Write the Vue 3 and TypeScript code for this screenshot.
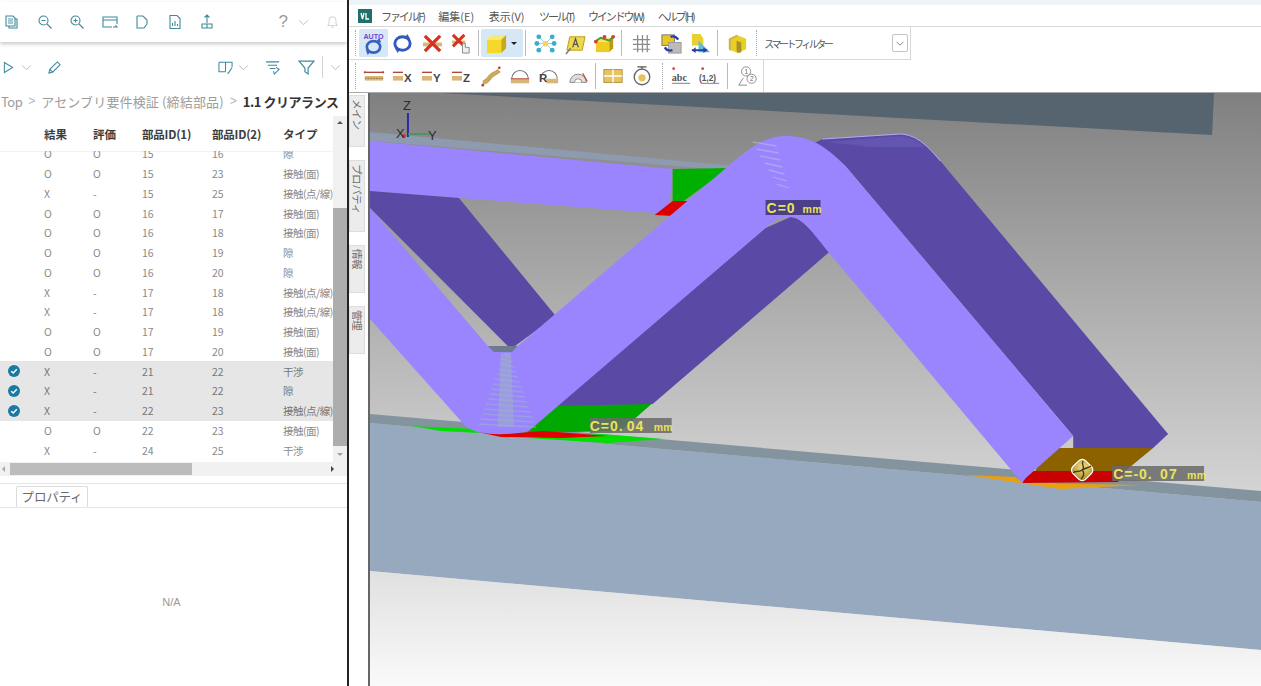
<script setup lang="ts">
interface Row { mark?: boolean; res: string; ev: string; a: number; b: number; type: string }
const t = { face: '接触(面)', line: '接触(点/線)', gap: '隙', hit: '干渉' }
const rows: Row[] = [
  { res: 'O', ev: 'O', a: 15, b: 16, type: t.gap },
  { res: 'O', ev: 'O', a: 15, b: 23, type: t.face },
  { res: 'X', ev: '-', a: 15, b: 25, type: t.line },
  { res: 'O', ev: 'O', a: 16, b: 17, type: t.face },
  { res: 'O', ev: 'O', a: 16, b: 18, type: t.face },
  { res: 'O', ev: 'O', a: 16, b: 19, type: t.gap },
  { res: 'O', ev: 'O', a: 16, b: 20, type: t.gap },
  { res: 'X', ev: '-', a: 17, b: 18, type: t.line },
  { res: 'X', ev: '-', a: 17, b: 18, type: t.line },
  { res: 'O', ev: 'O', a: 17, b: 19, type: t.face },
  { res: 'O', ev: 'O', a: 17, b: 20, type: t.face },
  { mark: true, res: 'X', ev: '-', a: 21, b: 22, type: t.hit },
  { mark: true, res: 'X', ev: '-', a: 21, b: 22, type: t.gap },
  { mark: true, res: 'X', ev: '-', a: 22, b: 23, type: t.line },
  { res: 'O', ev: 'O', a: 22, b: 23, type: t.face },
  { res: 'X', ev: '-', a: 24, b: 25, type: t.hit },
]
const menus = [
  { label: 'ファイル(F)', kana: true },
  { label: '編集(E)', kana: false },
  { label: '表示(V)', kana: false },
  { label: 'ツール(T)', kana: true },
  { label: 'ウインドウ(W)', kana: true },
  { label: 'ヘルプ(H)', kana: true },
]
const sideTabs = ['メイン', 'プロパティ', '情報', '管理']
const hatchA = Array.from({ length: 15 }, (_, i) => i)
const hatchB = Array.from({ length: 7 }, (_, i) => i)
</script>

<template>
  <div class="app">
    <aside class="left">
      <div class="bar1">
        <svg class="ic" viewBox="0 0 16 16"><path d="M2 2h7l2 2v8H2zM11 5h2v9H5v-2" /><path d="M4 4h5v6H4z" class="fillt" /></svg>
        <svg class="ic" viewBox="0 0 16 16"><circle cx="6.5" cy="6.5" r="4.5" /><path d="M4.5 6.500h4M10 10l4.500 4.500" /></svg>
        <svg class="ic" viewBox="0 0 16 16"><circle cx="6.500" cy="6.500" r="4.500" /><path d="M4.500 6.500h4M6.500 4.500v4M10 10l4.500 4.500" /></svg>
        <svg class="ic" viewBox="0 0 16 16"><path d="M1 3h14v3H1zM1 6v7h9M15 6v4M11 13h4l-1.500-1.500" /></svg>
        <svg class="ic" viewBox="0 0 16 16"><path d="M3 2h6l4 4v4M3 2v12h7l3-4" /></svg>
        <svg class="ic" viewBox="0 0 16 16"><path d="M3 1.500h7l3 3v10H3z" /><path d="M5.500 12V9M8 12V7M10.500 12V10" /></svg>
        <svg class="ic" viewBox="0 0 16 16"><path d="M8 1v8M5.500 3.500 8 1l2.500 2.500M3 10h10v4H3zM8 10v4" /></svg>
        <span class="help">?</span>
        <svg class="chev ch1" viewBox="0 0 12 8"><path d="M1 1.500 6 6.500l5-5" /></svg>
        <svg class="bell" viewBox="0 0 14 16"><path d="M7 2a4 4 0 0 0-4 4v4l-1.500 2h11L11 10V6a4 4 0 0 0-4-4zM5.500 14h3" /></svg>
      </div>
      <div class="bar2">
        <svg class="ic2" viewBox="0 0 12 14"><path d="M1.500 1.500v11l9-5.500z" /></svg>
        <svg class="chev ch2" viewBox="0 0 12 8"><path d="M1 1.500 6 6.500l5-5" /></svg>
        <svg class="ic pen" viewBox="0 0 16 16"><path d="M2 14l1-4 8-8 3 3-8 8zM3 10l3 3" /></svg>
        <span class="spacer"></span>
        <svg class="ic" viewBox="0 0 16 16"><path d="M1 2.500h14v5M1 2.500v10h7M8 2.500v10M15 8l-4 6-1 0" /></svg>
        <svg class="chev ch3" viewBox="0 0 12 8"><path d="M1 1.500 6 6.500l5-5" /></svg>
        <svg class="ic list" viewBox="0 0 16 16"><path d="M1 2h14M3 5.500h10M5 9h6M12 8l3 2-5 5-1-3" /></svg>
        <svg class="ic filter" viewBox="0 0 16 16"><path d="M1 2h14L9.500 8.500V14l-3-2V8.500z" /></svg>
        <i class="vsep"></i>
        <svg class="chev ch4" viewBox="0 0 12 8"><path d="M1 1.500 6 6.500l5-5" /></svg>
      </div>
      <nav class="crumb">
        <span class="top">Top</span><b class="gt">&gt;</b><span class="mid">アセンブリ要件検証 (締結部品)</span><b class="gt">&gt;</b><strong>1.1 クリアランス</strong>
      </nav>
      <div class="tablewrap">
        <div class="tablemain">
          <div class="thead">
            <span class="c0"></span><span class="c1">結果</span><span class="c2">評価</span><span class="c3">部品ID(1)</span><span class="c4">部品ID(2)</span><span class="c5">タイプ</span>
          </div>
          <div class="tbody">
            <div v-for="(r, i) in rows" :key="i" class="row" :class="{ sel: r.mark }">
              <span class="c0">
                <svg v-if="r.mark" class="check" viewBox="0 0 12 12"><circle cx="6" cy="6" r="6" /><path d="M3.200 6.200 5.200 8l3.600-3.800" /></svg>
              </span>
              <span class="c1">{{ r.res }}</span><span class="c2">{{ r.ev }}</span><span class="c3">{{ r.a }}</span><span class="c4">{{ r.b }}</span><span class="c5">{{ r.type }}</span>
            </div>
          </div>
        </div>
        <div class="vscroll">
          <span class="arr up"></span>
          <span class="vtrack"><i class="vthumb"></i></span>
          <span class="arr down"></span>
        </div>
      </div>
      <div class="hscroll">
        <span class="harr l"></span>
        <span class="htrack"><i class="hthumb"></i></span>
        <span class="harr r"></span>
      </div>
      <div class="tabs"><span class="tab">プロパティ</span></div>
      <div class="na">N/A</div>
    </aside>

    <main class="right">
      <div class="topstrip"></div>
      <div class="menubar">
        <svg class="logo" viewBox="0 0 14 14"><rect width="14" height="14" fill="#1f6f6a" /><path d="M3 4l1.500 6L6 4M8 4v6h3" stroke="#fff" fill="none" stroke-width="1.300" /></svg>
        <span v-for="m in menus" :key="m.label" class="menu" :class="{ kana: m.kana }">{{ m.label }}</span>
      </div>
      <div class="tbrow r1">
        <i class="grip"></i>
        <span class="tb active">
          <svg viewBox="0 0 24 24"><text x="12" y="7" class="auto">AUTO</text><ellipse cx="12" cy="15.500" rx="7" ry="6" fill="none" stroke="#3a5fc0" stroke-width="2.800" /><path d="M18 6l2 5-5-1zM6 24l-2-5 5 1z" fill="#3a5fc0" /></svg>
        </span>
        <span class="tb"><svg viewBox="0 0 24 24"><ellipse cx="12" cy="12" rx="8" ry="7" fill="none" stroke="#3458c0" stroke-width="3" /><path d="M17 2l3 5-6 0zM7 22l-3-5 6 0z" fill="#3458c0" /></svg></span>
        <span class="tb"><svg viewBox="0 0 24 24"><path d="M2 11h20v4H2z" fill="#d9b778" /><path d="M4 4l16 16M20 4 4 20" stroke="#d8321e" stroke-width="3.500" /></svg></span>
        <span class="tb"><svg viewBox="0 0 24 24"><path d="M2 9h14v3H2z" fill="#d9b778" /><path d="M3 3l12 12M15 3 3 15" stroke="#d8321e" stroke-width="3" /><path d="M13 15v-3h3v4h4v6h-7z" fill="#eee" stroke="#888" /></svg></span>
        <i class="sep"></i>
        <span class="tb active wide">
          <svg viewBox="0 0 24 24"><path d="M2 8h15v14H2z" fill="#f4d82a" /><path d="M2 8l5-5h15l-5 5z" fill="#f8ea70" /><path d="M17 8l5-5v14l-5 5z" fill="#c8a818" /></svg>
          <i class="caret"></i>
        </span>
        <i class="sep wider"></i>
        <span class="tb"><svg viewBox="0 0 24 24"><path d="M12 12 5 5M12 12l7-7M12 12l-7 7M12 12l7 7M12 12H3M12 12h9" stroke="#a8c8d8" /><circle cx="5" cy="5" r="2.500" fill="#36b0cc" /><circle cx="19" cy="5" r="2.500" fill="#36b0cc" /><circle cx="5" cy="19" r="2.500" fill="#36b0cc" /><circle cx="19" cy="19" r="2.500" fill="#36b0cc" /><circle cx="3" cy="12" r="2.500" fill="#36b0cc" /><circle cx="21" cy="12" r="2.500" fill="#36b0cc" /><circle cx="12" cy="12" r="3" fill="#f2d860" /></svg></span>
        <span class="tb"><svg viewBox="0 0 24 24"><path d="M6 5h16l-3 14H3z" fill="#efd94a" stroke="#b89a20" /><path d="M9 16l3-9 3 9M10 13h4" stroke="#555" fill="none" stroke-width="1.300" /><path d="M2 23l5-6" stroke="#777" stroke-width="1.500" /></svg></span>
        <span class="tb"><svg viewBox="0 0 24 24"><path d="M3 10h14v11H3z" fill="#f0cc20" /><path d="M3 10l4-4h14l-4 4z" fill="#f6e060" /><path d="M17 10l4-4v11l-4 4z" fill="#b89a14" /><path d="M2 10 8 6 17 9l4-4" stroke="#4a9a3a" fill="none" stroke-width="2" /><circle cx="3" cy="10" r="2" fill="#d83a3a" /><circle cx="12" cy="5" r="2" fill="#d83a3a" /><circle cx="21" cy="5" r="2" fill="#d83a3a" /></svg></span>
        <i class="sep wider"></i>
        <span class="tb"><svg viewBox="0 0 24 24"><path d="M8 3v18M13 3v18M18 3v18M3 8h18M3 13h18M3 18h18" stroke="#8a8a8a" stroke-width="1.300" /></svg></span>
        <span class="tb"><svg viewBox="0 0 24 24"><rect x="2" y="3" width="13" height="11" fill="#e8c820" stroke="#777" /><rect x="9" y="11" width="13" height="11" fill="#bbb" stroke="#999" /><path d="M5 16a7 7 0 0 0 8 3M19 8a7 7 0 0 0-8-3" stroke="#2a3fa8" stroke-width="2.500" fill="none" /></svg></span>
        <span class="tb"><svg viewBox="0 0 24 24"><path d="M3 2h9l3 5v7H3z" fill="#e8d030" /><path d="M10 9l12 12H10z" fill="#55c0e0" /><path d="M3 19h16" stroke="#2a3fa8" stroke-width="2" /><path d="M3 19l4-3v6zM19 19l-4-3v6z" fill="#2a3fa8" /></svg></span>
        <i class="sep wider"></i>
        <span class="tb"><svg viewBox="0 0 24 24"><path d="M3 7l8-4 10 4v11l-9 4-9-4z" fill="#e8d020" /><path d="M3 7l8-4 2 1-8 4v12l-2-2z" fill="#c9b060" /><path d="M11 9l5 2v10l-4 1-1-3z" fill="#a89030" /></svg></span>
        <i class="grip g2"></i>
        <span class="smart">スマートフィルター</span>
        <span class="dd"><svg viewBox="0 0 12 8"><path d="M2 2l4 4 4-4" /></svg></span>
      </div>
      <div class="tbrow r2">
        <i class="grip"></i>
        <span class="tb m"><svg viewBox="0 0 24 24"><path d="M2 8h20" stroke="#b0453a" stroke-width="1.500" /><circle cx="2" cy="8" r="1.200" fill="#b0453a" /><circle cx="22" cy="8" r="1.200" fill="#b0453a" /><rect x="2" y="12" width="20" height="5" fill="#d9b778" /><path d="M2 14.500h20" stroke="#8a6a3a" stroke-dasharray="2 1" /></svg></span>
        <span class="tb m"><svg viewBox="0 0 24 24"><path d="M1 8h11" stroke="#b0453a" stroke-width="1.500" /><rect x="1" y="12" width="11" height="5" fill="#d9b778" /><text x="13" y="18" class="ax">X</text></svg></span>
        <span class="tb m"><svg viewBox="0 0 24 24"><path d="M1 8h11" stroke="#b0453a" stroke-width="1.500" /><rect x="1" y="12" width="11" height="5" fill="#d9b778" /><text x="13" y="18" class="ax">Y</text></svg></span>
        <span class="tb m"><svg viewBox="0 0 24 24"><path d="M1 8h11" stroke="#b0453a" stroke-width="1.500" /><rect x="1" y="12" width="11" height="5" fill="#d9b778" /><text x="13" y="18" class="ax">Z</text></svg></span>
        <span class="tb m"><svg viewBox="0 0 24 24"><path d="M3 19c5 0 6-4 9-7s6-3 9-6" stroke="#c9a860" stroke-width="5" fill="none" /><circle cx="3" cy="22" r="1.500" fill="#b0453a" /><circle cx="21" cy="3" r="1.500" fill="#b0453a" /></svg></span>
        <span class="tb m"><svg viewBox="0 0 24 24"><path d="M3 15a9 9 0 0 1 18 0" stroke="#777" fill="none" stroke-width="1.300" /><rect x="2" y="15" width="20" height="5" fill="#d9b778" /><path d="M2 15h20" stroke="#b0453a" /></svg></span>
        <span class="tb m"><svg viewBox="0 0 24 24"><path d="M3 15a9 9 0 0 1 18 0" stroke="#777" fill="none" stroke-width="1.300" /><rect x="9" y="15" width="13" height="5" fill="#d9b778" /><text x="1" y="19" class="ax">R</text></svg></span>
        <span class="tb m"><svg viewBox="0 0 24 24"><path d="M2 19a9 9 0 0 1 18 0z" fill="#ddd" stroke="#888" /><path d="M7 19a4 4 0 0 1 8 0" fill="#fff" stroke="#888" /><path d="M16 9l5 9" stroke="#c04030" stroke-width="1.300" /></svg></span>
        <i class="sep"></i>
        <span class="tb m"><svg viewBox="0 0 24 24"><rect x="2" y="5" width="20" height="14" fill="#e8c460" stroke="#b09040" /><path d="M2 12h20M12 5v14" stroke="#fff" stroke-width="1.500" /></svg></span>
        <span class="tb m"><svg viewBox="0 0 24 24"><path d="M7 2h10M12 2v3" stroke="#555" stroke-width="1.500" /><circle cx="12" cy="13" r="8.500" fill="#fff" stroke="#666" stroke-width="1.500" /><circle cx="12" cy="14" r="4" fill="#e8c060" /></svg></span>
        <i class="grip g3"></i>
        <span class="tb m"><svg viewBox="0 0 24 24"><text x="2" y="17" class="abc">abc</text><path d="M2 20h20" stroke="#777" /><circle cx="4" cy="4" r="1.500" fill="#d84040" /></svg></span>
        <span class="tb m"><svg viewBox="0 0 24 24"><text x="0" y="17" class="abc n">(1,2)</text><path d="M2 20h20" stroke="#777" /><circle cx="4" cy="4" r="1.500" fill="#d84040" /></svg></span>
        <i class="sep wider"></i>
        <span class="tb m"><svg viewBox="0 0 24 24" class="people"><circle cx="11" cy="7" r="5" /><circle cx="17" cy="15" r="5" /><path d="M3 22l5-8M3 22h9" /><text x="9.200" y="9.500" class="num">1</text><text x="15.200" y="17.500" class="num">2</text></svg></span>
      </div>
      <div class="workarea">
        <div class="sidetabs">
          <span v-for="s in sideTabs" :key="s" class="stab" :class="'s-' + s.length">{{ s }}</span>
        </div>
        <svg class="scene" viewBox="369 92 892 594" preserveAspectRatio="none">
          <defs>
            <linearGradient id="bg" x1="0" y1="92" x2="0" y2="500" gradientUnits="userSpaceOnUse">
              <stop offset="0" stop-color="#808080" />
              <stop offset="0.45" stop-color="#a8a8a8" />
              <stop offset="1" stop-color="#d6d6d6" />
            </linearGradient>
            <linearGradient id="floor" x1="0" y1="570" x2="0" y2="686" gradientUnits="userSpaceOnUse">
              <stop offset="0" stop-color="#e0e0e0" />
              <stop offset="1" stop-color="#fafafa" />
            </linearGradient>
            <radialGradient id="ball" cx=".4" cy=".35" r=".75">
              <stop offset="0" stop-color="#f2e08a" />
              <stop offset="1" stop-color="#a88a28" />
            </radialGradient>
          </defs>
          <rect x="369" y="92" width="892" height="594" fill="url(#bg)" />
          <path d="M440 92H1214L1212 134z" fill="#55646e" />
          <!-- lower plate -->
          <path d="M369 422 1261 501V649L369 570z" fill="#96a9bf" />
          <path d="M369 413 1261 490V501L369 422z" fill="#84949f" />
          <path d="M369 570 1261 649V686H369z" fill="url(#floor)" />
          <!-- upper plate -->
          <path d="M369 131 735 165 735 170 369 140z" fill="#8e9aae" />
          <path d="M369 140 672 168 668 213 369 190z" fill="#9a85ff" />
          <path d="M672 168 728 167 683 200 672 200z" fill="#00b000" />
          <path d="M672 200 688 200 672 215 654 214z" fill="#dc0000" />
          <path d="M369 190 458 197 555 315 510 348 369 207z" fill="#5a4aa6" />
          <!-- contact at V -->
          <path d="M410 425 473 428 478 432 440 430z" fill="#00e000" />
          <path d="M527 437 600 433 663 438 607 442z" fill="#00e000" />
          <path d="M555 404 652 402 620 430 525 432z" fill="#00a800" />
          <path d="M477 431Q500 434 543 430L607 435 560 437 500 436z" fill="#e00000" />
          <!-- dark faces -->
          <path d="M765 227 790 216C800 216 810 228 830 250L652 403 555 405z" fill="#5a4aa6" />
          <path d="M814 142 822 138 900 133C915 134 925 142 940 160L1168 433 1153 447 1073 447 1073 435 845 165z" fill="#5a4aa6" />
          <path d="M826 141 900 135Q915 137 925 146L870 146z" fill="#6355b2" />
          <path d="M822 138 900 133C915 134 925 142 940 160" fill="none" stroke="#b8aaf8" stroke-width="1" />
          <!-- brown and red -->
          <path d="M1045 447 1153 447 1125 470 1035 470z" fill="#8c6200" />
          <path d="M966 474 1015 476 1022 482 1140 484 1060 488z" fill="#e8a010" />
          <path d="M1030 470 1125 470 1118 481 1022 482z" fill="#c80000" />
          <!-- light strap -->
          <path d="M369 207 487 345Q502 352 517 345L730 163C750 146 765 135 785 135C810 135 825 145 845 165L1073 435 1021 481 827 250C810 228 800 216 790 216C780 216 775 218 765 227L528 430Q500 436 477 431Q466 428 460 420L369 318z" fill="#9a85ff" />
          <path d="M487 345h30l-6 6h-18z" fill="#6f7a8e" />
          <path d="M500 352h10l3 74h-16z" fill="#9db3c6" opacity=".5" />
          <g stroke="#9db3c6" stroke-width="1.500" opacity=".55">
            <line v-for="i in hatchA" :key="i" :x1="503 - i * 1.800" :y1="353 + i * 5" :x2="510 + i * 1.800" :y2="356 + i * 5" />
          </g>
          <g stroke="#c0c0e8" stroke-width="1.300" opacity=".55">
            <line v-for="i in hatchB" :key="i" :x1="752 + i * 4" :y1="141 + i * 7" :x2="776 + i * 2" :y2="145 + i * 7" />
          </g>
          <!-- labels -->
          <rect x="765" y="199" width="55" height="15" fill="#4b3f88" />
          <text y="212" class="lbl"><tspan x="766">C=0</tspan><tspan x="802" class="unit">mm</tspan></text>
          <rect x="589" y="417" width="82" height="15" fill="#6a6a6a" opacity=".85" />
          <text y="430" class="lbl"><tspan x="589">C=0.</tspan><tspan x="626">04</tspan><tspan x="653" class="unit">mm</tspan></text>
          <rect x="1112" y="465" width="92" height="15" fill="#6a6a6a" opacity=".85" />
          <text y="478" class="lbl"><tspan x="1113">C=-0.</tspan><tspan x="1160">07</tspan><tspan x="1187" class="unit">mm</tspan></text>
          <!-- pick marker -->
          <rect x="1073" y="460" width="18" height="18" rx="5" transform="rotate(45 1082 469)" fill="url(#ball)" stroke="#fff" stroke-width="1.200" />
          <path d="M1083 460c-3 4 3 6-1 9s-8 0-9 3M1082 469c3 3 1 7-1 9M1082 469c3-2 6-2 9-4" fill="none" stroke="#4a3a10" stroke-width="1.400" />
          <!-- triad -->
          <path d="M407 112v24" stroke="#2a2aa8" stroke-width="2" />
          <path d="M407 133l22 0" stroke="#3a9a5a" stroke-width="1.500" />
          <circle cx="403" cy="135" r="2" fill="#d83030" />
          <text x="402" y="109" class="axis">Z</text>
          <text x="395" y="137" class="axis">X</text>
          <text x="427" y="139" class="axis">Y</text>
        </svg>
      </div>
    </main>
  </div>
</template>

<style>
html, body { margin: 0; background: #fff; overflow: hidden; }
</style>

<style scoped>
.app {
  display: flex;
  width: 1261px;
  height: 686px;
  overflow: hidden;
  font-family: "Noto Sans CJK JP", "Noto Sans", sans-serif;
  background: #fff;
}
.left {
  width: 347px;
  flex: none;
  display: flex;
  flex-direction: column;
  border-right: 2px solid #222;
  overflow: hidden;
}
svg { display: block; }
.bar1 {
  height: 40px;
  margin-top: 2px;
  padding: 0 10px 0 4px;
  display: flex;
  align-items: center;
  box-shadow: 0 2px 4px rgba(0,0,0,.22);
  flex: none;
}
.ic, .ic2, .chev, .bell { fill: none; stroke: #3d8a9c; stroke-width: 1.100; flex: none; }
.bar1 .ic { width: 16px; height: 16px; margin-right: 16.500px; }
.bar1 .ic .fillt { fill: #a8ccd6; stroke: none; }
.help { margin-left: 47px; font: 17px "Liberation Sans", sans-serif; color: #9a9a9a; }
.chev { width: 11px; height: 7px; stroke: #b4bcc0; }
.ch1 { margin-left: 10px; }
.bell { width: 13px; height: 14px; margin-left: 17px; stroke: #cfcfcf; }
.bar2 {
  height: 34px;
  margin-top: 8px;
  padding-left: 3px;
  display: flex;
  align-items: center;
  flex: none;
}
.ic2 { width: 11px; height: 13px; }
.ch2 { margin-left: 7px; }
.pen { width: 16px; height: 16px; margin-left: 15px; }
.spacer { flex: 1; }
.bar2 .ic { width: 15px; height: 15px; }
.ch3 { margin-left: 5px; }
.list { margin-left: 16px; }
.bar2 .filter { margin-left: 18px; width: 17px; height: 17px; }
.vsep { width: 1px; height: 22px; background: #d4d4d4; margin: 0 7px 0 7px; }
.ch4 { margin-right: 6px; }
.crumb {
  height: 24px;
  margin-top: 5px;
  display: flex;
  align-items: center;
  font-size: 13px;
  color: #9c9c9c;
  white-space: nowrap;
  flex: none;
}
.top { margin-left: 1px; letter-spacing: -.5px; }
.mid { letter-spacing: .15px; }
.gt { font-weight: 400; font-size: 12px; margin: 0 6px; color: #b4b4b4; font-family: "Liberation Sans", sans-serif; }
.crumb strong { font-weight: 700; color: #333; letter-spacing: -.45px; }
.tablewrap {
  flex: none;
  height: 346px;
  display: flex;
  margin-top: 3px;
}
.tablemain { width: 333px; flex: none; overflow: hidden; }
.thead {
  height: 35px;
  display: flex;
  align-items: center;
  font-size: 11.500px;
  font-weight: 700;
  color: #3c3c3c;
  box-shadow: 0 1px 1px rgba(0,0,0,.05);
  position: relative;
  z-index: 1;
  background: #fff;
}
.c0 { width: 44px; flex: none; display: flex; justify-content: center; }
.c1 { width: 49px; flex: none; }
.c2 { width: 49px; flex: none; }
.c3 { width: 70px; flex: none; }
.c4 { width: 71px; flex: none; }
.c5 { width: 50px; flex: none; white-space: nowrap; }
.thead .c3, .thead .c4 { letter-spacing: -.2px; }
.tbody { height: 311px; overflow: hidden; }
.row {
  height: 19.750px;
  display: flex;
  align-items: center;
  font-size: 10.500px;
  color: #8a8a8a;
  white-space: nowrap;
}
.row:first-child { margin-top: -7px; }
.row .c5 { letter-spacing: -.5px; }
.row.sel { background: #e6e6e6; color: #777; }
.row .c0 { justify-content: flex-start; }
.check { width: 12px; height: 12px; margin-left: 8px; }
.check circle { fill: #1a7aa3; }
.check path { fill: none; stroke: #fff; stroke-width: 1.400; }
.vscroll {
  width: 14px;
  flex: none;
  display: flex;
  flex-direction: column;
  background: #f0f0f0;
}
.arr { height: 14px; flex: none; position: relative; }
.arr::after {
  content: "";
  position: absolute;
  left: 4px;
  top: 5px;
  border: 3.500px solid transparent;
}
.arr.up::after { border-bottom-color: #555; border-top-width: 0; }
.arr.down::after { border-top-color: #a0a0a0; border-bottom-width: 0; }
.vtrack { flex: 1; display: flex; flex-direction: column; justify-content: flex-end; padding-bottom: 2px; }
.vthumb { height: 238px; background: #adadad; display: block; }
.hscroll {
  height: 14px;
  flex: none;
  display: flex;
  align-items: center;
  background: #f1f1f1;
}
.harr { width: 10px; height: 14px; flex: none; position: relative; }
.harr::after {
  content: "";
  position: absolute;
  top: 4px;
  left: 2px;
  border: 3.500px solid transparent;
}
.harr.l::after { border-right-color: #a8a8a8; border-left-width: 0; }
.harr.r::after { border-left-color: #444; border-right-width: 0; left: 3px; }
.htrack { width: 318px; height: 12px; flex: none; }
.hthumb { display: block; width: 182px; height: 12px; background: #bcbcbc; }
.tabs {
  height: 23px;
  margin-top: 7px;
  padding-left: 16px;
  border-top: 1px solid #dfe8ea;
  border-bottom: 1px solid #dfe8ea;
  display: flex;
  align-items: flex-end;
  flex: none;
}
.tab {
  width: 72px;
  height: 21px;
  box-sizing: border-box;
  border: 1px solid #dcdcdc;
  border-bottom: none;
  border-radius: 2px 2px 0 0;
  background: #fff;
  font-size: 12.500px;
  line-height: 20px;
  color: #6a6a6a;
  text-align: center;
  letter-spacing: -.2px;
}
.na {
  flex: 1;
  display: flex;
  align-items: center;
  justify-content: center;
  padding-top: 10px;
  font: 11px "Liberation Sans", sans-serif;
  color: #999;
  margin-right: 4px;
}
.right {
  flex: 1;
  min-width: 0;
  display: flex;
  flex-direction: column;
}
.topstrip { height: 5px; background: #eef3f5; flex: none; }
.menubar {
  height: 21px;
  display: flex;
  align-items: center;
  padding-left: 9px;
  border-bottom: 1px solid #d8d8d8;
  font-size: 11px;
  color: #555;
  flex: none;
}
.logo { width: 14px; height: 14px; margin-right: 9px; }
.menu { margin-right: 14.500px; white-space: nowrap; }
.menu.kana { letter-spacing: -2.100px; }
.tbrow { display: flex; align-items: center; flex: none; box-sizing: border-box; }
.r1 {
  height: 33px;
  width: 562px;
  padding: 0 2px 0 6px;
  border-bottom: 1px solid #d8d8d8;
  border-right: 1px solid #d8d8d8;
}
.r2 {
  height: 32px;
  width: 415px;
  padding-left: 6px;
  border-right: 1px solid #d8d8d8;
}
.grip { width: 1px; height: 26px; border-left: 1px dotted #aaa; margin-right: 2px; flex: none; }
.tb {
  width: 29.300px;
  height: 28px;
  display: flex;
  align-items: center;
  justify-content: center;
  flex: none;
  border-radius: 2px;
  box-sizing: border-box;
}
.tb svg { width: 23px; height: 23px; }
.tb.m svg { width: 22px; height: 22px; }
.tb.active { background: #d6e8f6; }
.tb.wide { width: 42px; gap: 3px; justify-content: flex-start; padding-left: 4px; }
.caret { border: 3px solid transparent; border-top: 3.500px solid #222; border-bottom: 0; display: block; }
.sep { width: 1px; height: 26px; background: #bbb; margin: 0 2px; flex: none; }
.sep.wider { margin-right: 5px; }
.auto { font: 700 7.500px "Liberation Sans", sans-serif; fill: #7a3fd0; text-anchor: middle; }
.ax { font: 700 12.500px "Liberation Sans", sans-serif; fill: #444; }
.abc { font: 700 11px "Liberation Serif", serif; fill: #555; }
.abc.n { font: 700 9px "Liberation Sans", sans-serif; }
.people { fill: none; stroke: #888; }
.num { font: 7px "Liberation Sans", sans-serif; fill: #666; stroke: none; }
.g2 { margin-left: 4px; }
.g3 { margin-left: 5px; }
.smart { font-size: 10px; color: #555; margin-left: 4px; flex: 1; white-space: nowrap; letter-spacing: -2.500px; }
.dd {
  width: 14px;
  height: 16px;
  border: 1px solid #c4c4c4;
  border-radius: 2px;
  display: flex;
  align-items: center;
  justify-content: center;
}
.dd svg { width: 10px; height: 7px; fill: none; stroke: #777; }
.workarea {
  flex: 1;
  display: flex;
  min-height: 0;
  border-top: 1px solid #aaa;
}
.sidetabs {
  width: 21px;
  box-sizing: border-box;
  flex: none;
  display: flex;
  flex-direction: column;
  gap: 13px;
  padding-top: 2px;
  border-right: 2px solid #666;
}
.stab {
  width: 16px;
  background: #ececec;
  border: 1px solid #ddd;
  box-sizing: border-box;
  writing-mode: vertical-rl;
  text-orientation: sideways;
  font-size: 10.500px;
  color: #6a6a6a;
  padding-top: 3px;
  display: flex;
  align-items: center;
  height: 52px;
  letter-spacing: -.4px;
}
.s-5 { height: 72px; }
.s-2 { height: 48px; }
.scene { flex: 1; min-width: 0; height: 594px; }
.lbl { font: 700 14px "Liberation Sans", sans-serif; fill: #e8e45a; letter-spacing: 1px; }
.unit { font-size: 10.500px; letter-spacing: .3px; }
.axis { font: 13px "Liberation Sans", sans-serif; fill: #2c2c2c; }
</style>
